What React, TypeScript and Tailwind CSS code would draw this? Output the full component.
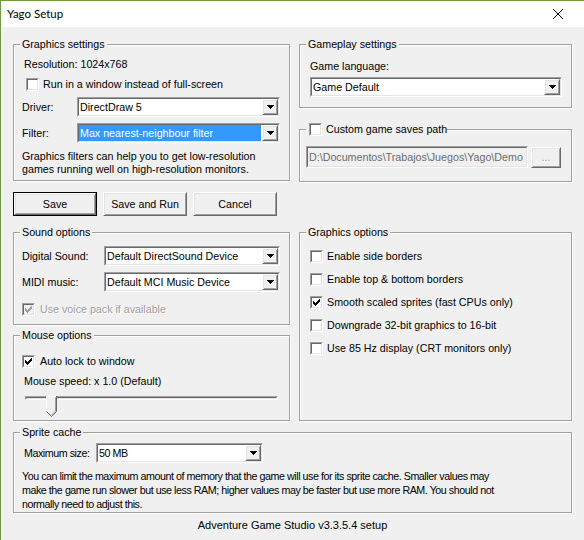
import React from 'react'

// Classic Win32 look: sunken/raised 3D edges built from two nested borders.
function Sunken({ className = '', inner = '', children }: { className?: string; inner?: string; children?: React.ReactNode }) {
  return (
    <div className={`border border-t-[#a0a0a0] border-l-[#a0a0a0] border-r-white border-b-white ${className}`}>
      <div className={`h-full border border-t-[#696969] border-l-[#696969] border-r-[#e3e3e3] border-b-[#e3e3e3] ${inner}`}>
        {children}
      </div>
    </div>
  )
}

function Raised({ className = '', children }: { className?: string; children?: React.ReactNode }) {
  return (
    <div
      className={`bg-[#f0f0f0] border border-t-white border-l-white border-r-[#696969] border-b-[#696969] shadow-[inset_1px_1px_0_#e3e3e3,inset_-1px_-1px_0_#a0a0a0] ${className}`}
    >
      {children}
    </div>
  )
}

function Check({ checked, disabled }: { checked?: boolean; disabled?: boolean }) {
  return (
    <Sunken className="w-[13px] h-[13px] shrink-0" inner={`${disabled ? 'bg-[#f0f0f0]' : 'bg-white'} flex items-center justify-center`}>
      {checked && (
        <svg width="7" height="7" viewBox="0 0 7 7" shapeRendering="crispEdges">
          <path
            fill={disabled ? '#a0a0a0' : '#000'}
            d="M6 0h1v1h-1z M5 1h2v1h-2z M0 2h1v1h-1z M4 2h3v1h-3z M0 3h2v1h-2z M3 3h3v1h-3z M0 4h5v1h-5z M1 5h3v1h-3z M2 6h1v1h-1z"
          />
        </svg>
      )}
    </Sunken>
  )
}

function Combo({ value, width, selected }: { value: string; width: string; selected?: boolean }) {
  return (
    <Sunken className={`h-[20px] shrink-0 ${width}`} inner="bg-white flex">
      <div className={`flex-1 min-w-0 mr-[1px] pl-[1px] flex items-center whitespace-nowrap overflow-hidden ${selected ? 'bg-[#3399ff] text-white' : ''}`}>
        {value}
      </div>
      <Raised className="w-[16px] shrink-0 flex items-center justify-center">
        <svg width="7" height="4" viewBox="0 0 7 4" shapeRendering="crispEdges">
          <path d="M0 0h7v1h-7z M1 1h5v1h-5z M2 2h3v1h-3z M3 3h1v1h-1z" fill="#000" />
        </svg>
      </Raised>
    </Sunken>
  )
}

function Button({ label, def }: { label: string; def?: boolean }) {
  return (
    <div className={`w-[84px] h-[24px] ${def ? 'border border-black' : ''}`}>
      <Raised className="h-full flex items-center justify-center">{label}</Raised>
    </div>
  )
}

function Group({
  label,
  className = '',
  inner = 'px-[8px]',
  labelClass = 'ml-[6px] px-[2px]',
  children,
}: {
  label: React.ReactNode
  className?: string
  inner?: string
  labelClass?: string
  children?: React.ReactNode
}) {
  return (
    <div className={`border border-[#a0a0a0] shadow-[inset_1px_1px_0_#fff,1px_1px_0_#fff] ${className}`}>
      <div className={`-mt-[7px] h-[13px] w-fit bg-[#f0f0f0] leading-[13px] flex items-center whitespace-nowrap ${labelClass}`}>
        {label}
      </div>
      <div className={inner}>{children}</div>
    </div>
  )
}

function CheckRow({ label, checked, disabled, className = '' }: { label: string; checked?: boolean; disabled?: boolean; className?: string }) {
  return (
    <div className={`h-[13px] flex items-center gap-[4px] whitespace-nowrap ${className}`}>
      <Check checked={checked} disabled={disabled} />
      <span className={disabled ? 'text-[#a0a0a0] [text-shadow:1px_1px_0_#fff]' : ''}>{label}</span>
    </div>
  )
}

function Slider() {
  return (
    <div className="relative mt-[7px] ml-[3px] w-[253px] h-[21px]">
      <Sunken className="mt-[8px] h-[4px]" />
      <svg className="absolute left-[21px] top-0" width="11" height="21" viewBox="0 0 11 21">
        <path d="M0.5 0.5H10.5V15.5L5.5 20.5L0.5 15.5Z" fill="#f0f0f0" stroke="none" />
        <path d="M0.5 15.5V0.5H10" stroke="#ffffff" fill="none" />
        <path d="M10.5 0V15.5L5.5 20.5L0.5 15.5" stroke="#696969" fill="none" />
        <path d="M9.5 1.5V15L5.5 19" stroke="#a0a0a0" fill="none" />
      </svg>
    </div>
  )
}

export default function App() {
  return (
    <div className="w-[584px] h-[540px] overflow-hidden bg-[#f0f0f0] border-l border-t border-[#6f9a3f] text-[10.7px] text-black font-['Liberation_Sans',Arial,sans-serif]">
      {/* title bar */}
      <div className="h-[26px] bg-white flex items-center justify-between pl-[6px] pr-[21px]">
        <span className="text-[11.5px] font-['Lato','Noto_Sans',sans-serif]">Yago Setup</span>
        <svg width="10" height="10" viewBox="0 0 10 10">
          <path d="M0 0L10 10M10 0L0 10" stroke="#000" strokeWidth="1" />
        </svg>
      </div>

      <div className="pt-[17px] pl-[12px] pr-[11px]">
        <div className="flex gap-[9px]">
          {/* left column */}
          <div className="w-[277px] flex flex-col">
            <Group label="Graphics settings" className="h-[137px]">
              <div className="mt-[6px] ml-[2px] leading-[14px]">Resolution: 1024x768</div>
              <CheckRow className="mt-[7px] ml-[4px] gap-[3px]" label="Run in a window instead of full-screen" />
              <div className="mt-[6px] h-[20px] flex items-center">
                <span className="w-[55px]">Driver:</span>
                <Combo value="DirectDraw 5" width="w-[203px]" />
              </div>
              <div className="mt-[6px] h-[20px] flex items-center">
                <span className="w-[55px]">Filter:</span>
                <Combo value="Max nearest-neighbour filter" width="w-[203px]" selected />
              </div>
              <div className="mt-[7px] leading-[13px] whitespace-nowrap">
                Graphics filters can help you to get low-resolution
                <br />
                games running well on high-resolution monitors.
              </div>
            </Group>

            <div className="mt-[11px] flex gap-[6px]">
              <Button label="Save" def />
              <Button label="Save and Run" />
              <Button label="Cancel" />
            </div>

            <Group label="Sound options" className="mt-[16px] h-[93px]">
              <div className="mt-[7px] h-[20px] flex items-center">
                <span className="w-[82px]">Digital Sound:</span>
                <Combo value="Default DirectSound Device" width="w-[176px]" />
              </div>
              <div className="mt-[6px] h-[20px] flex items-center">
                <span className="w-[82px]">MIDI music:</span>
                <Combo value="Default MCI Music Device" width="w-[176px]" />
              </div>
              <CheckRow className="mt-[11px] gap-[5px]" label="Use voice pack if available" checked disabled />
            </Group>

            <Group label="Mouse options" className="mt-[10px] h-[86px]">
              <CheckRow className="mt-[13px] gap-[5px]" label="Auto lock to window" checked />
              <div className="mt-[7px] ml-[2px] leading-[13px]">Mouse speed: x 1.0 (Default)</div>
              <Slider />
            </Group>
          </div>

          {/* right column */}
          <div className="w-[273px] flex flex-col">
            <Group label="Gameplay settings" className="h-[64px]" inner="px-[10px]">
              <div className="mt-[9px] leading-[13px]">Game language:</div>
              <div className="mt-[4px]">
                <Combo value="Game Default" width="w-[252px]" />
              </div>
            </Group>

            <Group
              label={
                <>
                  <Check />
                  <span className="ml-[4px]">Custom game saves path</span>
                </>
              }
              labelClass="ml-[6px] pl-[3px] w-[251px]"
              className="mt-[21px] h-[53px]"
              inner="px-[6px]"
            >
              <div className="mt-[10px] flex gap-[3px]">
                <Sunken className="w-[222px] h-[22px]" inner="bg-[#f0f0f0] pl-[1px] flex items-center overflow-hidden whitespace-nowrap text-[#6d6d6d]">
                  D:\Documentos\Trabajos\Juegos\Yago\Demo
                </Sunken>
                <Raised className="mt-[1px] w-[30px] h-[21px] flex items-center justify-center text-[#a0a0a0] [text-shadow:1px_1px_0_#fff]">
                  ...
                </Raised>
              </div>
            </Group>

            <Group label="Graphics options" className="mt-[50px] h-[189px]" inner="px-[10px]">
              <CheckRow className="mt-[11px]" label="Enable side borders" />
              <CheckRow className="mt-[10px]" label="Enable top & bottom borders" />
              <CheckRow className="mt-[10px]" label="Smooth scaled sprites (fast CPUs only)" checked />
              <CheckRow className="mt-[10px]" label="Downgrade 32-bit graphics to 16-bit" />
              <CheckRow className="mt-[10px]" label="Use 85 Hz display (CRT monitors only)" />
            </Group>
          </div>
        </div>

        <Group label="Sprite cache" className="mt-[11px] w-[559px] h-[81px]">
          <div className="tracking-[-0.45px]">
            <div className="mt-[4px] h-[20px] flex items-center">
              <span className="ml-[2px] w-[72px] whitespace-nowrap">Maximum size:</span>
              <Combo value="50 MB" width="w-[167px]" />
            </div>
            <div className="mt-[6px] leading-[14px] whitespace-nowrap">
              You can limit the maximum amount of memory that the game will use for its sprite cache. Smaller values may
              <br />
              make the game run slower but use less RAM; higher values may be faster but use more RAM. You should not
              <br />
              normally need to adjust this.
            </div>
          </div>
        </Group>

        <div className="mt-[6px] w-[559px] text-center leading-[13px] text-[11px]">Adventure Game Studio v3.3.5.4 setup</div>
      </div>
    </div>
  )
}
